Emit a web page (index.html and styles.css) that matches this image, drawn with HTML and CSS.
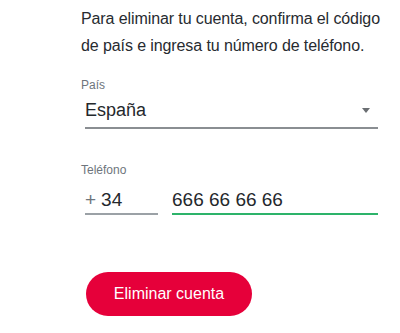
FILE: index.html
```html
<!DOCTYPE html>
<html lang="es">
<head>
<meta charset="utf-8">
<link rel="stylesheet" href="styles.css">
</head>
<body>
<main class="page">
  <p class="intro">Para eliminar tu cuenta, confirma el código de país e ingresa tu número de teléfono.</p>

  <div class="field country-field">
    <div class="label">País</div>
    <div class="select">
      <span class="select-value">España</span>
      <span class="caret"></span>
    </div>
  </div>

  <div class="field phone-field">
    <div class="label">Teléfono</div>
    <div class="phone-row">
      <div class="code"><span class="plus">+</span><span class="code-num">34</span></div>
      <div class="number">666 66 66 66</div>
    </div>
  </div>

  <button class="delete-btn" type="button">Eliminar cuenta</button>
</main>
</body>
</html>
```

FILE: styles.css
```css
html, body {
  margin: 0;
  padding: 0;
  background: #ffffff;
}

body {
  font-family: "Liberation Sans", Arial, sans-serif;
  color: #2a2e33;
}

.page {
  width: 400px;
  height: 333px;
  box-sizing: border-box;
  padding: 6px 20px 0 81px;
}

.intro {
  margin: 0;
  font-size: 16px;
  line-height: 26.5px;
  color: #272b30;
  letter-spacing: -0.1px;
}

.field .label {
  font-size: 12px;
  line-height: 16px;
  color: #6e757c;
}

.country-field {
  margin-top: 18px;
}

.select {
  margin: 5px 2px 0 4px;
  display: flex;
  align-items: center;
  justify-content: space-between;
  font-size: 18px;
  line-height: 24px;
  padding-bottom: 5px;
  border-bottom: 2px solid #8a8e92;
}

.select-value {
  color: #24282c;
}

.caret {
  width: 0;
  height: 0;
  border-left: 4.5px solid transparent;
  border-right: 4.5px solid transparent;
  border-top: 5px solid #6a6e72;
  margin-right: 8px;
}

.phone-field {
  margin-top: 33px;
}

.phone-row {
  margin: 10px 2px 0 4px;
  display: flex;
  gap: 14px;
  font-size: 19px;
  line-height: 24px;
}

.code {
  width: 73px;
  flex: none;
  padding-bottom: 1px;
  border-bottom: 2px solid #9ba1a6;
}

.plus {
  color: #6e757c;
  margin-right: 5px;
}

.code-num {
  color: #24282c;
}

.number {
  flex: 1;
  padding-bottom: 1px;
  border-bottom: 2px solid #2db36a;
  color: #24282c;
}

.delete-btn {
  display: block;
  margin-top: 57px;
  margin-left: 5px;
  width: 166px;
  height: 44px;
  border: none;
  border-radius: 22px;
  background: #e6003a;
  color: #ffffff;
  font-family: "Liberation Sans", Arial, sans-serif;
  font-size: 16px;
  padding: 0;
}
```
